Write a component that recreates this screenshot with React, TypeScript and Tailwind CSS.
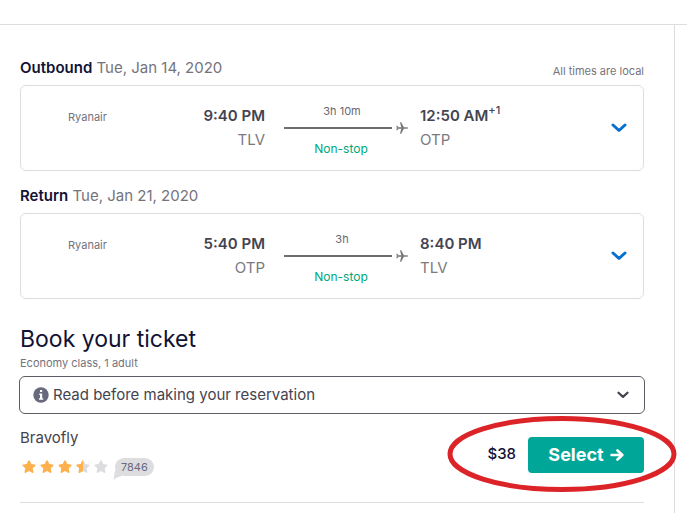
type Stop = { time: string; airport: string; dayOffset?: string };

type Leg = {
  label: string;
  date: string;
  airline: string;
  from: Stop;
  to: Stop;
  duration: string;
  note?: string;
};

const legs: Leg[] = [
  {
    label: 'Outbound',
    date: 'Tue, Jan 14, 2020',
    airline: 'Ryanair',
    from: { time: '9:40 PM', airport: 'TLV' },
    to: { time: '12:50 AM', airport: 'OTP', dayOffset: '+1' },
    duration: '3h 10m',
    note: 'All times are local',
  },
  {
    label: 'Return',
    date: 'Tue, Jan 21, 2020',
    airline: 'Ryanair',
    from: { time: '5:40 PM', airport: 'OTP' },
    to: { time: '8:40 PM', airport: 'TLV' },
    duration: '3h',
  },
];

function Chevron({ className }: { className: string }) {
  return (
    <svg viewBox="0 0 16 10" fill="none" stroke="currentColor" strokeWidth="3" strokeLinecap="round" strokeLinejoin="round" className={className} aria-hidden="true">
      <path d="M2 2 L8 7.5 L14 2" />
    </svg>
  );
}

function Plane() {
  return (
    <svg viewBox="0 0 12 12" fill="currentColor" className="h-3 w-3 shrink-0 text-[#7b7980]" aria-hidden="true">
      <path d="M12 6 Q12 6.7 11 6.7 H7.9 L5.2 11.8 H4 L5.2 6.7 H2.4 L1.2 8.3 H0.2 L0.9 6 L0.2 3.7 H1.2 L2.4 5.3 H5.2 L4 0.2 H5.2 L7.9 5.3 H11 Q12 5.3 12 6 Z" />
    </svg>
  );
}

const starPath =
  'M8 1.2 Q8.5 1.2 8.9 2 L10.3 5.1 L13.7 5.5 Q15.3 5.8 14.2 7 L11.7 9.3 L12.4 12.7 Q12.6 14.4 11.1 13.7 L8 12 L4.9 13.7 Q3.4 14.4 3.6 12.7 L4.3 9.3 L1.8 7 Q0.7 5.8 2.3 5.5 L5.7 5.1 L7.1 2 Q7.5 1.2 8 1.2 Z';

function Star({ fill }: { fill: 'full' | 'half' | 'empty' }) {
  return (
    <svg viewBox="0 0 16 16" className="h-4 w-4" aria-hidden="true">
      <path d={starPath} fill={fill === 'full' ? '#fdb04b' : '#dddde0'} />
      {fill === 'half' && (
        <svg x="0" y="0" width="8" height="16" viewBox="0 0 8 16">
          <path d={starPath} fill="#fdb04b" />
        </svg>
      )}
    </svg>
  );
}

function LegSection({ leg }: { leg: Leg }) {
  return (
    <section className="mb-3.5">
      <header className="flex h-6 items-center justify-between pb-0.5">
        <h2 className="text-[15px] leading-6 text-[#74737c]">
          <span className="font-semibold text-[#111236]">{leg.label}</span> {leg.date}
        </h2>
        {leg.note && <span className="pt-1.5 text-[11px] leading-4 text-[#74737c]">{leg.note}</span>}
      </header>
      <div className="mt-1 grid h-[86px] grid-cols-[244fr_124px_238fr] items-center rounded-md border border-[#dddde0] pr-4">
        <div className="flex items-start justify-between pl-[47px]">
          <span className="pt-[5px] text-[11px] leading-4 text-[#74737c]">{leg.airline}</span>
          <div className="text-right text-[15px] leading-6">
            <div className="font-semibold text-[#444450]">{leg.from.time}</div>
            <div className="text-[#7b7980]">{leg.from.airport}</div>
          </div>
        </div>
        <div className="ml-[19px] flex w-[124px] flex-col pt-1 leading-4">
          <span className="w-[116px] text-center text-[11px] leading-4 text-[#68676f]">{leg.duration}</span>
          <div className="mt-[3px] mb-[7px] flex items-center justify-between">
            <div className="h-0.5 w-[108px] bg-[#6d6b70]" />
            <Plane />
          </div>
          <span className="w-[114px] text-center text-xs leading-4 text-[#00a67c]">Non-stop</span>
        </div>
        <div className="flex items-center justify-between pl-[31px]">
          <div className="text-[15px] leading-6">
            <div className="flex items-start font-semibold text-[#444450]">
              {leg.to.time}
              {leg.to.dayOffset && <span className="text-[11px] leading-3 font-medium">{leg.to.dayOffset}</span>}
            </div>
            <div className="text-[#7b7980]">{leg.to.airport}</div>
          </div>
          <button type="button" aria-label={`Show ${leg.label} details`} className="text-[#0770cf]">
            <Chevron className="h-[10px] w-4" />
          </button>
        </div>
      </div>
    </section>
  );
}

export default function App() {
  return (
    <div className="flex min-h-screen flex-col bg-white pt-6 font-['Inter',sans-serif]">
      <div className="border-t border-[#dddde0]" />
      <main className="mr-3 grow border-r border-[#dddde0] pt-8 pr-[30px] pl-5">
        {legs.map((leg) => (
          <LegSection key={leg.label} leg={leg} />
        ))}

        <section className="pt-2.5">
          <h1 className="text-[23px] leading-8 text-[#111236]">Book your ticket</h1>
          <p className="text-[11px] leading-4 text-[#74737c]">Economy class, 1 adult</p>
          <div className="-mx-px mt-[5px]">
            <button type="button" className="flex h-[38px] w-full items-center rounded-md border border-[#5e5d66] px-[13px] text-left text-[15px] text-[#444450]">
              <svg viewBox="0 0 16 16" className="mr-1 h-4 w-4" aria-hidden="true">
                <circle cx="8" cy="8" r="7.7" fill="#68697f" />
                <path d="M7 3h2.2v2H7zM6.3 6.4h2.9v4.8h1v1.6H6v-1.6h1V8H6.3z" fill="#fff" />
              </svg>
              <span className="grow">Read before making your reservation</span>
              <Chevron className="mr-0.5 h-2 w-3" />
            </button>
          </div>

          <div className="flex items-center justify-between border-b border-[#dddde0] pt-3 pb-[23px]">
            <div>
              <h3 className="text-[15px] leading-6 text-[#444450]">Bravofly</h3>
              <div className="mt-[5px] flex h-6 items-center gap-0.5 pl-px">
                <Star fill="full" />
                <Star fill="full" />
                <Star fill="full" />
                <Star fill="half" />
                <Star fill="empty" />
                <span className="relative ml-1 h-[18px] rounded-full bg-[#dddde0] px-[6px] text-[11px] leading-[18px] text-[#68697f]">
                  7846
                  <svg viewBox="0 0 10 10" className="absolute top-3 -left-0.5 h-2.5 w-2.5" aria-hidden="true">
                    <path d="M2 0 L0.5 10 Q3 7 9 6 Z" fill="#dddde0" />
                  </svg>
                </span>
              </div>
            </div>
            <div className="relative mt-1 flex items-center gap-3">
              <span className="text-[15px] font-medium text-[#111236]">$38</span>
              <button type="button" className="flex h-9 w-[116px] items-center justify-center gap-1.5 rounded-[4px] bg-[#00a698] text-lg font-bold text-white">
                Select
                <svg viewBox="0 0 14 14" fill="none" stroke="currentColor" strokeWidth="2.6" strokeLinecap="round" strokeLinejoin="round" className="h-3.5 w-3.5" aria-hidden="true">
                  <path d="M1.5 7 H12 M7.5 2.5 L12.3 7 L7.5 11.5" />
                </svg>
              </button>
              <svg viewBox="0 0 230 78" fill="none" className="pointer-events-none absolute -top-[22px] -right-[33px] h-[78px] w-[230px] max-w-none" aria-hidden="true">
                <ellipse cx="115" cy="39" rx="112" ry="35.5" stroke="#db2328" strokeWidth="5" />
              </svg>
            </div>
          </div>
        </section>
      </main>
    </div>
  );
}
